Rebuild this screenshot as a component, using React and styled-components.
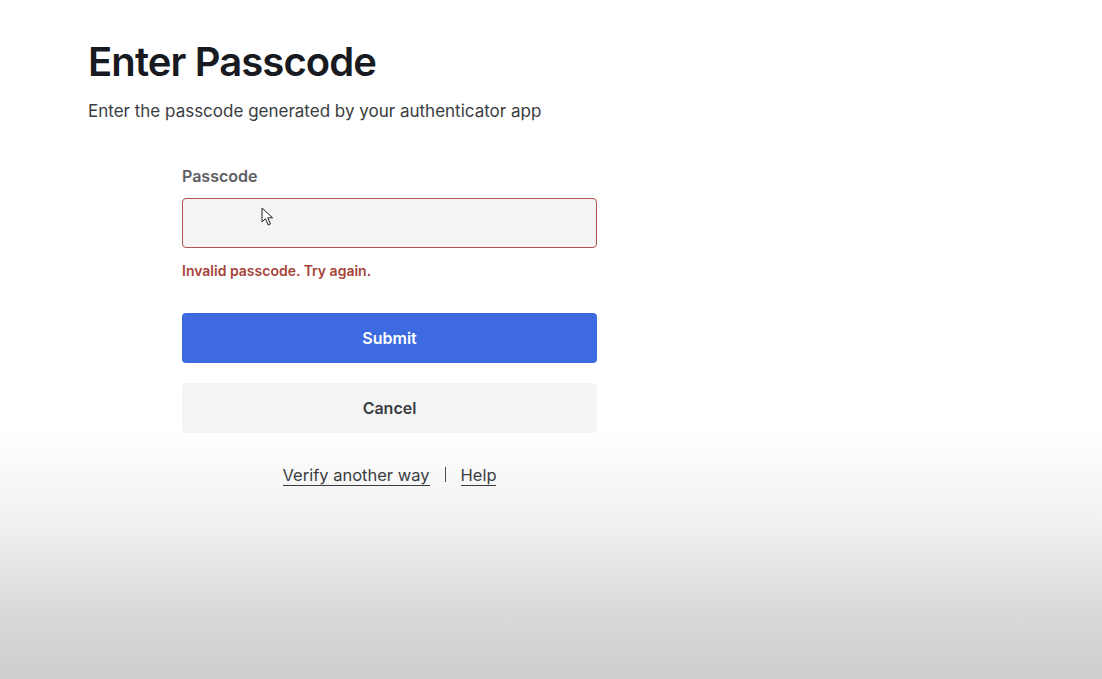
import React from "react";
import styled, { createGlobalStyle } from "styled-components";

const GlobalStyle = createGlobalStyle`
  html, body {
    margin: 0;
    padding: 0;
  }
  body {
    font-family: Inter, "Noto Sans", "Liberation Sans", sans-serif;
    background: linear-gradient(
      to bottom,
      #ffffff 0px,
      #ffffff 430px,
      #f1f1f1 520px,
      #dcdcdc 600px,
      #cdcdcd 679px
    );
    min-height: 679px;
  }
`;

const Page = styled.main`
  min-height: 679px;
  box-sizing: border-box;
  padding: 38px 0 0 88px;
`;

const Title = styled.h1`
  margin: 0;
  font-size: 40px;
  line-height: 48px;
  font-weight: 600;
  letter-spacing: -0.9px;
  color: #171a20;
`;

const Subtitle = styled.p`
  margin: 13px 0 0;
  font-size: 17px;
  line-height: 24px;
  color: #393c41;
`;

const Form = styled.form`
  width: 415px;
  margin: 43px 0 0 94px;
  display: flex;
  flex-direction: column;
`;

const Label = styled.label`
  font-size: 16px;
  line-height: 20px;
  font-weight: 600;
  color: #5c5e62;
  margin-bottom: 12px;
`;

const InputWrap = styled.div`
  position: relative;
`;

const Input = styled.input`
  box-sizing: border-box;
  width: 100%;
  height: 50px;
  border: 1px solid ${(props) => (props.invalid ? "#b0514a" : "#d0d1d2")};
  border-radius: 4px;
  background: #f4f4f4;
  outline: none;
  padding: 0 16px;
  font: inherit;
`;

const Cursor = styled.svg`
  position: absolute;
  left: 79px;
  top: 9px;
  pointer-events: none;
`;

const ErrorText = styled.div`
  margin-top: 14px;
  font-size: 14px;
  line-height: 18px;
  font-weight: 600;
  color: #a8433a;
`;

const Button = styled.button`
  box-sizing: border-box;
  width: 100%;
  height: 50px;
  border: none;
  border-radius: 4px;
  font: inherit;
  font-size: 16px;
  font-weight: 600;
  cursor: pointer;
  background: ${(props) => (props.primary ? "#3e6ae1" : "#f4f4f4")};
  color: ${(props) => (props.primary ? "#ffffff" : "#393c41")};
  margin-top: ${(props) => props.gap || 0}px;
`;

const Links = styled.div`
  margin-top: 32px;
  display: flex;
  justify-content: center;
  align-items: center;
  gap: 15px;
  font-size: 16.5px;
  line-height: 22px;
  color: #393c41;
`;

const Link = styled.a`
  color: #393c41;
  text-decoration: none;
  border-bottom: 1px solid #393c41;
  line-height: 20px;
  cursor: pointer;
`;

const Sep = styled.span`
  display: block;
  width: 1px;
  height: 15px;
  margin-top: -2px;
  background: #4a4d52;
`;

const App = () => (
  <>
    <GlobalStyle />
    <Page>
      <Title>Enter Passcode</Title>
      <Subtitle>Enter the passcode generated by your authenticator app</Subtitle>
      <Form onSubmit={(e) => e.preventDefault()}>
        <Label htmlFor="passcode">Passcode</Label>
        <InputWrap>
          <Input id="passcode" invalid />
          <Cursor width="14" height="20" viewBox="0 0 14 20">
            <path
              d="M1 1 L1 15 L4.5 11.6 L7.2 18 L9.4 17 L6.8 10.8 L11.6 10.8 Z"
              fill="#ffffff"
              stroke="#222"
              strokeWidth="1"
              strokeLinejoin="round"
            />
          </Cursor>
        </InputWrap>
        <ErrorText>Invalid passcode. Try again.</ErrorText>
        <Button primary gap={33}>
          Submit
        </Button>
        <Button type="button" gap={20}>
          Cancel
        </Button>
        <Links>
          <Link>Verify another way</Link>
          <Sep aria-hidden="true" />
          <Link>Help</Link>
        </Links>
      </Form>
    </Page>
  </>
);

export default App;
